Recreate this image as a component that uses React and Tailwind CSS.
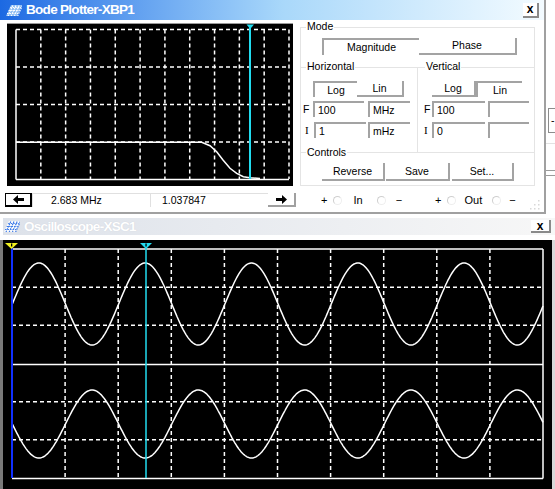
import React from "react";

const RAISED = "border-r-2 border-b-2 border-[#a3a3a3]";
const SUNKEN = "border-t-2 border-l-2 border-[#a3a3a3]";

function Btn({ cls, pressed, children }) {
  return (
    <div className={`${cls} ${pressed ? SUNKEN : RAISED} flex items-center justify-center leading-none bg-white`}>
      {children}
    </div>
  );
}

function Field({ cls, children }) {
  return (
    <div className={`${cls} h-[16px] border-t-2 border-l-2 border-[#a3a3a3] flex items-center pl-[3px] leading-none`}>
      {children}
    </div>
  );
}

function Radio({ cls }) {
  return <span className={`${cls} inline-block w-[9px] h-[9px] rounded-full border border-[#cfcfcf] border-r-[#eeeeee] border-b-[#eeeeee]`} />;
}

function InstrIcon({ light }) {
  const a = light ? "#ffffff" : "#3d7be8";
  const b = light ? "#9cc8f5" : "#ffffff";
  return (
    <svg width="16" height="11" viewBox="0 0 16 11">
      <polygon points="5,0 16,0 11,11 0,11" fill={b} opacity="0.9" />
      {[0, 1, 2, 3].map((i) => (
        <line key={"a" + i} x1={2 + i * 3.2} y1="11" x2={7 + i * 3.2} y2="0" stroke={a} strokeWidth="1.2" strokeDasharray="1.5 1" />
      ))}
      {[0, 1, 2].map((i) => (
        <line key={"b" + i} x1={1 + i * 1.6} y1={8.5 - i * 3} x2={12 + i * 1.6} y2={8.5 - i * 3} stroke={a} strokeWidth="1.1" strokeDasharray="1.5 1" />
      ))}
    </svg>
  );
}

function BodePlot() {
  const vx = [];
  for (let k = 1; k <= 11; k++) vx.push(9 + 24.818 * k);
  const hy = [6.5, 44, 81.5, 119];
  const curve =
    "M9,119.3 L194.7,119.3 L203,122.7 L209.7,128.7 L216,137 L223,145.3 L229.7,150.3 L236.3,153.7 L243,154.7 L253,155.6";
  return (
    <svg width="286" height="163" viewBox="0 0 286 163" className="block">
      <rect x="0" y="0" width="286" height="163" fill="#000" />
      <line x1="0" y1="0.5" x2="286" y2="0.5" stroke="#9a9a9a" strokeWidth="1" />
      {vx.map((x, i) => (
        <line key={i} x1={x} y1="6.5" x2={x} y2="156" stroke="#fff" strokeWidth="1.5" strokeDasharray="4 3" />
      ))}
      {hy.map((y, i) => (
        <line key={i} x1="9" y1={y} x2="282" y2={y} stroke="#fff" strokeWidth="1.5" strokeDasharray="4 3" />
      ))}
      <line x1="9" y1="6.5" x2="9" y2="156.5" stroke="#fff" strokeWidth="1.5" />
      <line x1="9" y1="156.5" x2="282" y2="156.5" stroke="#fff" strokeWidth="1.5" />
      <path d={curve} fill="none" stroke="#fff" strokeWidth="1.5" />
      <line x1="243" y1="2" x2="243" y2="156" stroke="#22dcf0" strokeWidth="2" />
      <polygon points="239.5,1.5 247,1.5 243.2,6" fill="#22dcf0" />
    </svg>
  );
}

function ScopePlot() {
  const vx = [];
  for (let k = 1; k <= 9; k++) vx.push(9 + 53.1 * k);
  const hy = [];
  for (let k = 1; k <= 5; k++) if (k !== 3) hy.push(9 + 38.17 * k);
  const mk = (fn) => {
    let d = "";
    for (let x = 12; x <= 543; x += 1) {
      const y = fn(x);
      d += (x === 12 ? "M" : "L") + (x - 3).toFixed(1) + "," + (y - 240).toFixed(1) + " ";
    }
    return d;
  };
  const P = 106.3;
  const up = mk((x) => 304 - 41 * Math.cos((2 * Math.PI * (x - 38.9)) / P));
  const lo = mk((x) => 424 + 34 * Math.cos((2 * Math.PI * (x - 38.9)) / P));
  return (
    <svg width="549" height="249" viewBox="0 0 549 249" className="block">
      <rect x="0" y="0" width="549" height="249" fill="#000" />
      {vx.map((x, i) => (
        <line key={i} x1={x} y1="9" x2={x} y2="238" stroke="#fff" strokeWidth="1.5" strokeDasharray="4 3" />
      ))}
      {hy.map((y, i) => (
        <line key={i} x1="9" y1={y} x2="540" y2={y} stroke="#fff" strokeWidth="1.5" strokeDasharray="4 3" />
      ))}
      <line x1="9" y1="124.5" x2="540" y2="124.5" stroke="#fff" strokeWidth="1.5" />
      <line x1="9" y1="9" x2="540" y2="9" stroke="#fff" strokeWidth="1.5" />
      <line x1="540" y1="9" x2="540" y2="238.5" stroke="#fff" strokeWidth="1.5" />
      <line x1="9" y1="238.5" x2="540" y2="238.5" stroke="#fff" strokeWidth="1.5" />
      <path d={up} fill="none" stroke="#fff" strokeWidth="1.5" />
      <path d={lo} fill="none" stroke="#fff" strokeWidth="1.5" />
      <line x1="143" y1="3" x2="143" y2="238" stroke="#22dcf0" strokeWidth="1.5" />
      <line x1="9" y1="3" x2="9" y2="238" stroke="#1030ff" strokeWidth="2" />
      <polygon points="2,3 15,3 8.5,9" fill="#f0f020" />
      <polygon points="137,3 149,3 143,9" fill="#22dcf0" />
      <rect x="8" y="3.5" width="1.3" height="3" fill="#000" />
      <rect x="142.4" y="3.5" width="1.3" height="3" fill="#000" />
    </svg>
  );
}

function Arrow({ dir }) {
  return (
    <svg width="11" height="9" viewBox="0 0 11 9">
      {dir === "left" ? (
        <polygon points="0,4.5 5,0 5,3 11,3 11,6 5,6 5,9" fill="#000" />
      ) : (
        <polygon points="11,4.5 6,0 6,3 0,3 0,6 6,6 6,9" fill="#000" />
      )}
    </svg>
  );
}

export default function App() {
  return (
    <div className="relative w-[555px] h-[489px] bg-white overflow-hidden font-['Liberation_Sans',Arial,sans-serif] text-[10.5px] text-black">
      {/* right-side partial background window */}
      <div className="absolute left-[548px] top-[108px] w-[10px] h-[25px] border-l border-t border-b border-[#8c8c8c] flex items-center pl-[2px] leading-none">-</div>
      <div className="absolute left-[546px] top-[143px] w-[10px] border-t border-[#e2e2e2]" />
      <div className="absolute left-[546px] top-[170px] w-[10px] border-t border-[#9a9a9a]" />
      <div className="absolute left-[546px] top-[175px] w-[10px] border-t border-[#9a9a9a]" />

      {/* Bode plotter window */}
      <div className="absolute left-0 top-0 w-[546px] h-[214px] border-r-2 border-b-2 border-[#a0a0a0] bg-white flex flex-col">
        <div className="h-[20px] flex items-center bg-linear-to-r from-[#1c69e2] via-[#a9d8fa] via-52% to-[#f3fbff]">
          <div className="ml-[6px] flex items-center">
            <InstrIcon light />
          </div>
          <span className="ml-[4px] text-white font-bold text-[13.5px] tracking-[-0.7px] leading-none">Bode Plotter-XBP1</span>
          <div className="ml-auto mr-[5px] w-[16px] h-[15px] bg-white border-r-2 border-b-2 border-[#8a8a8a] flex items-center justify-center font-bold text-[12px] leading-none">x</div>
        </div>

        <div className="flex flex-1">
          {/* left column */}
          <div className="w-[300px] flex flex-col">
            <div className="mt-[3px] ml-[7px]">
              <BodePlot />
            </div>
            <div className="mt-[7px] ml-[5px] flex h-[14px]">
              <div className="w-[27px] border border-black border-r-2 border-b-2 flex items-center justify-center">
                <Arrow dir="left" />
              </div>
              <div className="w-[118px] border-t border-l border-[#e0e0e0] pl-[18px] flex items-center leading-none">2.683 MHz</div>
              <div className="w-[118px] border-t border-l border-[#e0e0e0] pl-[11px] flex items-center leading-none">1.037847</div>
              <div className="w-[28px] border-r-2 border-b-2 border-[#a0a0a0] flex items-center justify-center">
                <Arrow dir="right" />
              </div>
            </div>
          </div>

          {/* right column */}
          <div className="flex flex-col">
            <div className="mt-[7px] w-[235px] h-[159px] border border-[#e4e4e4] flex flex-col">
              {/* Mode */}
              <div className="relative h-[40px] border-b border-[#e4e4e4]">
                <span className="absolute left-[5px] top-[-7px] px-[1px] bg-white leading-none">Mode</span>
                <div className="pt-[10px] pl-[21px] flex">
                  <Btn cls="w-[97px] h-[17px]" pressed>Magnitude</Btn>
                  <Btn cls="w-[98px] h-[17px]">Phase</Btn>
                </div>
              </div>
              {/* Horizontal / Vertical */}
              <div className="h-[85px] flex border-b border-[#e4e4e4]">
                <div className="relative w-[117px] border-r border-[#e4e4e4]">
                  <span className="absolute left-[5px] top-[-7px] px-[1px] bg-white leading-none">Horizontal</span>
                  <div className="pt-[13px] pl-[12px] flex h-[29px]">
                    <Btn cls="w-[44px] h-[16px]" pressed>Log</Btn>
                    <Btn cls="w-[47px] h-[16px]">Lin</Btn>
                  </div>
                  <div className="mt-[4px] flex items-center pl-[2px]">
                    <span className="w-[10px] leading-none">F</span>
                    <Field cls="w-[51px]">100</Field>
                    <Field cls="ml-[4px] w-[42px]">MHz</Field>
                  </div>
                  <div className="mt-[5px] flex items-center pl-[4px]">
                    <span className="w-[9px] leading-none font-['Liberation_Serif',serif] text-[11px]">I</span>
                    <Field cls="w-[52px]">1</Field>
                    <Field cls="ml-[2px] w-[42px]">mHz</Field>
                  </div>
                </div>
                <div className="relative flex-1">
                  <span className="absolute left-[7px] top-[-7px] px-[1px] bg-white leading-none">Vertical</span>
                  <div className="pt-[13px] pl-[14px] flex h-[29px]">
                    <Btn cls="w-[44px] h-[16px]">Log</Btn>
                    <Btn cls="w-[46px] h-[16px]" pressed>Lin</Btn>
                  </div>
                  <div className="mt-[4px] flex items-center pl-[6px]">
                    <span className="w-[8px] leading-none">F</span>
                    <Field cls="w-[53px]">100</Field>
                    <Field cls="ml-[3px] w-[41px]"></Field>
                  </div>
                  <div className="mt-[5px] flex items-center pl-[6px]">
                    <span className="w-[8px] leading-none font-['Liberation_Serif',serif] text-[11px]">I</span>
                    <Field cls="w-[53px]">0</Field>
                    <Field cls="ml-[3px] w-[41px]"></Field>
                  </div>
                </div>
              </div>
              {/* Controls */}
              <div className="relative flex-1">
                <span className="absolute left-[5px] top-[-6px] px-[1px] bg-white leading-none">Controls</span>
                <div className="pt-[10px] pl-[21px] flex">
                  <Btn cls="w-[63px] h-[18px]">Reverse</Btn>
                  <Btn cls="ml-[1px] w-[64px] h-[18px]">Save</Btn>
                  <Btn cls="ml-[2px] w-[62px] h-[18px]">Set...</Btn>
                </div>
              </div>
            </div>
            {/* terminals */}
            <div className="mt-[7px] h-[14px] flex items-center leading-none text-[11px]">
              <span className="ml-[21px]">+</span>
              <Radio cls="ml-[6px]" />
              <span className="ml-[11px]">In</span>
              <Radio cls="ml-[14px]" />
              <span className="ml-[10px]">−</span>
              <span className="ml-[33px]">+</span>
              <Radio cls="ml-[5px]" />
              <span className="ml-[9px]">Out</span>
              <Radio cls="ml-[10px]" />
              <span className="ml-[8px]">−</span>
            </div>
          </div>
        </div>

        {/* resize grip */}
        <svg className="absolute right-[4px] bottom-[2px]" width="11" height="11" viewBox="0 0 11 11">
          {[[9, 1], [9, 5], [5, 5], [9, 9], [5, 9], [1, 9]].map(([x, y], i) => (
            <rect key={i} x={x} y={y} width="1.5" height="1.5" fill="#d8d8d8" />
          ))}
        </svg>
      </div>

      {/* Oscilloscope window */}
      <div className="absolute left-0 top-[214px] w-[555px] h-[275px] flex flex-col">
        <div className="mt-[4px] ml-[3px] h-[17px] flex items-center bg-linear-to-r from-[#dde2ea] to-[#f7f7f7]">
          <div className="ml-[1px] flex items-center">
            <InstrIcon />
          </div>
          <span className="ml-[4px] text-white font-bold text-[13.5px] tracking-[-0.7px] leading-none [text-shadow:0_0_1px_#c8ccd4]">Oscilloscope-XSC1</span>
          <div className="ml-auto mr-[4px] w-[20px] h-[13px] bg-white border-r-2 border-b-2 border-[#8a8a8a] flex items-center justify-center font-bold text-[12px] leading-none">x</div>
        </div>
        <div className="mt-[5px] flex">
          <div className="w-[3px] bg-[#7a7a7a]" />
          <ScopePlot />
          <div className="flex-1 bg-[#d8d8d8]" />
        </div>
      </div>
    </div>
  );
}
